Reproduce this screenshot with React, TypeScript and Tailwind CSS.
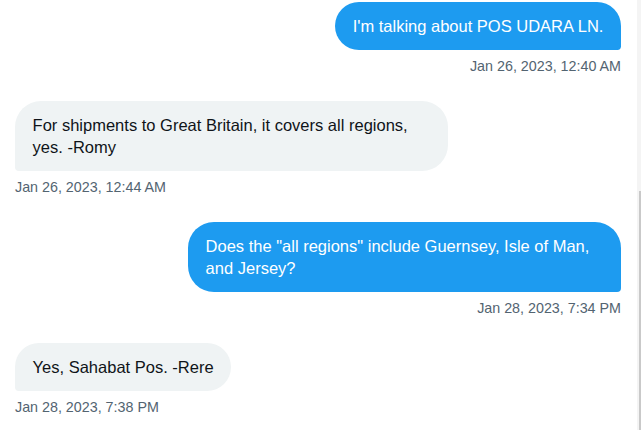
import React from "react";

type Message = {
  id: number;
  fromMe: boolean;
  text: string;
  time: string;
};

const messages: Message[] = [
  {
    id: 1,
    fromMe: true,
    text: "I'm talking about POS UDARA LN.",
    time: "Jan 26, 2023, 12:40 AM",
  },
  {
    id: 2,
    fromMe: false,
    text: "For shipments to Great Britain, it covers all regions, yes. -Romy",
    time: "Jan 26, 2023, 12:44 AM",
  },
  {
    id: 3,
    fromMe: true,
    text: 'Does the "all regions" include Guernsey, Isle of Man, and Jersey?',
    time: "Jan 28, 2023, 7:34 PM",
  },
  {
    id: 4,
    fromMe: false,
    text: "Yes, Sahabat Pos. -Rere",
    time: "Jan 28, 2023, 7:38 PM",
  },
];

function MessageRow({ message }: { message: Message }) {
  return (
    <div
      className={
        message.fromMe ? "flex flex-col items-end" : "flex flex-col items-start"
      }
    >
      <div
        className={
          message.fromMe
            ? "max-w-[433px] rounded-[26px] rounded-br-[4px] bg-[#1d9bf0] px-[17.6px] py-[13px] text-[16.5px] leading-[22px] text-white"
            : "max-w-[433px] rounded-[26px] rounded-bl-[4px] bg-[#eff3f4] px-[17.6px] py-[13px] text-[16.5px] leading-[22px] text-[#0f1419]"
        }
      >
        {message.text}
      </div>
      <div className="mt-[8px] text-[14.3px] leading-[17px] text-[#536471]">
        {message.time}
      </div>
    </div>
  );
}

export default function App() {
  return (
    <div
      className="flex h-[430px] w-[641px] overflow-hidden bg-white"
      style={{ fontFamily: '"Liberation Sans", Arial, sans-serif' }}
    >
      <div className="flex flex-1 flex-col gap-[26px] pt-[2px] pr-[16px] pl-[15px]">
        {messages.map((message) => (
          <MessageRow key={message.id} message={message} />
        ))}
      </div>
      {/* scrollbar edge */}
      <div className="flex w-[4px] flex-col items-end bg-[#f4f4f4]">
        <div className="h-[191px]" />
        <div className="w-[2px] flex-1 bg-[#c9c9c9]" />
      </div>
    </div>
  );
}
